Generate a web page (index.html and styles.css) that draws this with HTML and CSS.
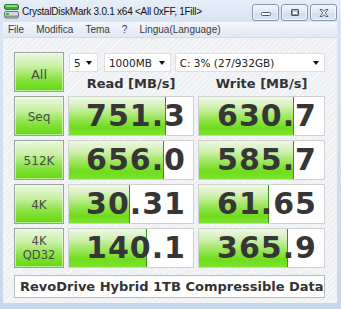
FILE: index.html
```html
<!DOCTYPE html>
<html>
<head>
<meta charset="utf-8">
<link rel="stylesheet" href="styles.css">
</head>
<body>
<div class="window">
  <div class="titlebar">
    <svg class="appicon" width="15" height="15" viewBox="0 0 15 15">
      <rect x="0.5" y="0.5" width="14" height="5" rx="1.5" fill="#3fae3f" stroke="#2a7d2a"/>
      <rect x="1.5" y="1.3" width="12" height="1.4" rx="0.7" fill="#a9e6a9"/>
      <rect x="0.5" y="7.5" width="14" height="6.5" rx="1.5" fill="#d6d9dc" stroke="#6f7479"/>
      <rect x="1" y="11.5" width="13" height="2" fill="#8e9398"/>
      <rect x="2" y="9" width="3" height="2" fill="#38b838"/>
    </svg>
    <span class="title">CrystalDiskMark 3.0.1 x64 &lt;All 0xFF, 1Fill&gt;</span>
    <div class="caption-buttons">
      <div class="cbtn"><svg width="12" height="8" viewBox="0 0 12 8"><rect x="1.5" y="3.5" width="9" height="3" rx="1" fill="#fff" stroke="#47566e"/></svg></div>
      <div class="cbtn"><svg width="12" height="9" viewBox="0 0 12 9"><rect x="2.5" y="1.5" width="7" height="6" rx="0.5" fill="none" stroke="#47566e"/><rect x="3.5" y="3" width="5" height="3.5" fill="#fff" stroke="#47566e" stroke-width="0.6"/></svg></div>
      <div class="cbtn"><svg width="12" height="10" viewBox="0 0 12 10"><path d="M2 1.5h2.2L6 3.6 7.8 1.5H10L7.2 5 10 8.5H7.8L6 6.4 4.2 8.5H2L4.8 5z" fill="#fff" stroke="#47566e" stroke-width="0.9" stroke-linejoin="round"/></svg></div>
    </div>
  </div>
  <div class="frame">
    <div class="menubar">
      <span class="menu">File</span>
      <span class="menu">Modifica</span>
      <span class="menu">Tema</span>
      <span class="menu">?</span>
      <span class="menu">Lingua(Language)</span>
    </div>
    <div class="client">
      <div class="bench">
        <div class="btn btn-all">All</div>
        <div class="top">
          <div class="selects">
            <div class="select s-count"><span>5</span><i class="arrow"></i></div>
            <div class="select s-size"><span>1000MB</span><i class="arrow"></i></div>
            <div class="select s-drive"><span>C: 3% (27/932GB)</span><i class="arrow"></i></div>
          </div>
          <div class="headers">
            <div class="head">Read [MB/s]</div>
            <div class="head">Write [MB/s]</div>
          </div>
        </div>

        <div class="btn">Seq</div>
        <div class="val"><div class="bar" style="width:97px"></div><span>751.3</span></div>
        <div class="val"><div class="bar" style="width:95px"></div><span>630.7</span></div>

        <div class="btn">512K</div>
        <div class="val"><div class="bar" style="width:95px"></div><span>656.0</span></div>
        <div class="val"><div class="bar" style="width:95px"></div><span>585.7</span></div>

        <div class="btn">4K</div>
        <div class="val"><div class="bar" style="width:61px"></div><span>30.31</span></div>
        <div class="val"><div class="bar" style="width:70px"></div><span>61.65</span></div>

        <div class="btn two">4K<br>QD32</div>
        <div class="val"><div class="bar" style="width:78px"></div><span>140.1</span></div>
        <div class="val"><div class="bar" style="width:89px"></div><span>365.9</span></div>
      </div>
      <div class="comment">RevoDrive Hybrid 1TB Compressible Data</div>
    </div>
  </div>
</div>
</body>
</html>
```
FILE: styles.css
```css
html, body {
  margin: 0;
  padding: 0;
}
body {
  width: 341px;
  height: 309px;
  overflow: hidden;
  font-family: "Liberation Sans", Arial, sans-serif;
  background: #c9daee;
}
.window {
  width: 341px;
  height: 309px;
  display: flex;
  flex-direction: column;
  background: linear-gradient(#d9e6f4, #c6d8ed);
}
.titlebar {
  height: 22px;
  display: flex;
  align-items: center;
  padding-left: 4px;
  background: linear-gradient(#e6eef8, #d8e4f2);
  box-sizing: border-box;
}
.appicon {
  display: block;
  margin-top: 1px;
}
.title {
  margin-left: 3px;
  font-size: 10px;
  letter-spacing: -0.25px;
  color: #111;
}
.caption-buttons {
  margin-left: auto;
  margin-right: 4px;
  display: flex;
  gap: 2px;
  align-self: flex-start;
  margin-top: 4px;
}
.cbtn {
  width: 25px;
  height: 15px;
  border: 1px solid #8797b0;
  border-radius: 3px;
  background: linear-gradient(#f4f7fb, #dfe7f1 50%, #d2dceb 51%, #dde6f2);
  display: flex;
  align-items: center;
  justify-content: center;
  box-shadow: inset 0 0 0 1px rgba(255,255,255,0.6);
}
.frame {
  flex: 1;
  display: flex;
  flex-direction: column;
  padding: 0 4px 6px 3px;
}
.menubar {
  height: 16px;
  display: flex;
  align-items: center;
  background: linear-gradient(#f3f6fb, #dfe8f4);
  border-bottom: 1px solid #d0dbe9;
  font-size: 10px;
  color: #3a3a3a;
  box-sizing: border-box;
}
.menu {
  margin-left: 12px;
}
.menu:first-child {
  margin-left: 5px;
}
.client {
  flex: 1;
  background:
    repeating-linear-gradient(135deg, rgba(255,255,255,0.55) 0 1px, rgba(255,255,255,0) 1px 4px),
    #eef0f3;
  padding: 14px 0 0 11px;
  box-sizing: border-box;
}
.bench {
  display: grid;
  grid-template-columns: 50px 126px 127px;
  grid-auto-rows: 40px;
  gap: 4px;
}
.btn {
  box-sizing: border-box;
  border: 1px solid #9aa19a;
  background: linear-gradient(#eaf8de 0%, #c9f0a4 35%, #8fe34a 65%, #62d90c 100%);
  box-shadow: inset 0 0 0 1px rgba(255,255,255,0.55);
  display: flex;
  align-items: center;
  justify-content: center;
  text-align: center;
  font-family: "DejaVu Sans", Verdana, sans-serif;
  font-size: 12px;
  color: #4a4a4a;
  padding-top: 2px;
}
.btn-all {
  font-size: 13px;
  padding-top: 4px;
}
.btn.two {
  font-size: 11.5px;
  line-height: 14px;
  padding-top: 0;
}
.top {
  grid-column: 2 / 4;
  display: flex;
  flex-direction: column;
  padding-top: 1px;
}
.selects {
  display: flex;
  height: 19px;
  padding-left: 1px;
}
.select {
  box-sizing: border-box;
  height: 19px;
  background: #fff;
  border: 1px solid #dedede;
  display: flex;
  align-items: center;
  padding: 0 5px 0 4px;
  font-family: "DejaVu Sans", Verdana, sans-serif;
  font-size: 10.5px;
  color: #222;
}
.s-count { width: 29px; }
.s-size { width: 67px; margin-left: 6px; }
.s-drive { width: 151px; margin-left: 4px; }
.arrow {
  margin-left: auto;
  width: 0;
  height: 0;
  border-left: 3.5px solid transparent;
  border-right: 3.5px solid transparent;
  border-top: 4px solid #111;
}
.headers {
  display: grid;
  grid-template-columns: 126px 127px;
  gap: 4px;
  margin-top: 3px;
}
.head {
  text-align: center;
  font-family: "DejaVu Sans", Verdana, sans-serif;
  font-weight: bold;
  font-size: 13px;
  line-height: 17px;
  color: #333;
}
.val {
  position: relative;
  box-sizing: border-box;
  border: 1px solid #cfd2cf;
  background: #fff;
  display: flex;
  align-items: center;
  justify-content: flex-end;
  padding-right: 7px;
  overflow: hidden;
}
.bar {
  position: absolute;
  left: 0;
  top: 0;
  bottom: 0;
  background: linear-gradient(#eef8e6 0%, #d3f0b6 25%, #9be65a 55%, #6fdc1c 80%, #7fe230 100%);
  border-right: 1px solid #3d8f1f;
  box-sizing: border-box;
}
.val span {
  position: relative;
  font-family: "DejaVu Sans", Verdana, sans-serif;
  font-weight: bold;
  font-size: 30px;
  letter-spacing: 1px;
  color: #363636;
  line-height: 38px;
}
.comment {
  box-sizing: border-box;
  width: 311px;
  height: 23px;
  margin-top: 7px;
  background: #fff;
  border: 1px solid #b8bcc0;
  padding-left: 5px;
  display: flex;
  align-items: center;
  font-family: "DejaVu Sans", Verdana, sans-serif;
  font-weight: bold;
  font-size: 13px;
  color: #333;
  white-space: nowrap;
}
```
